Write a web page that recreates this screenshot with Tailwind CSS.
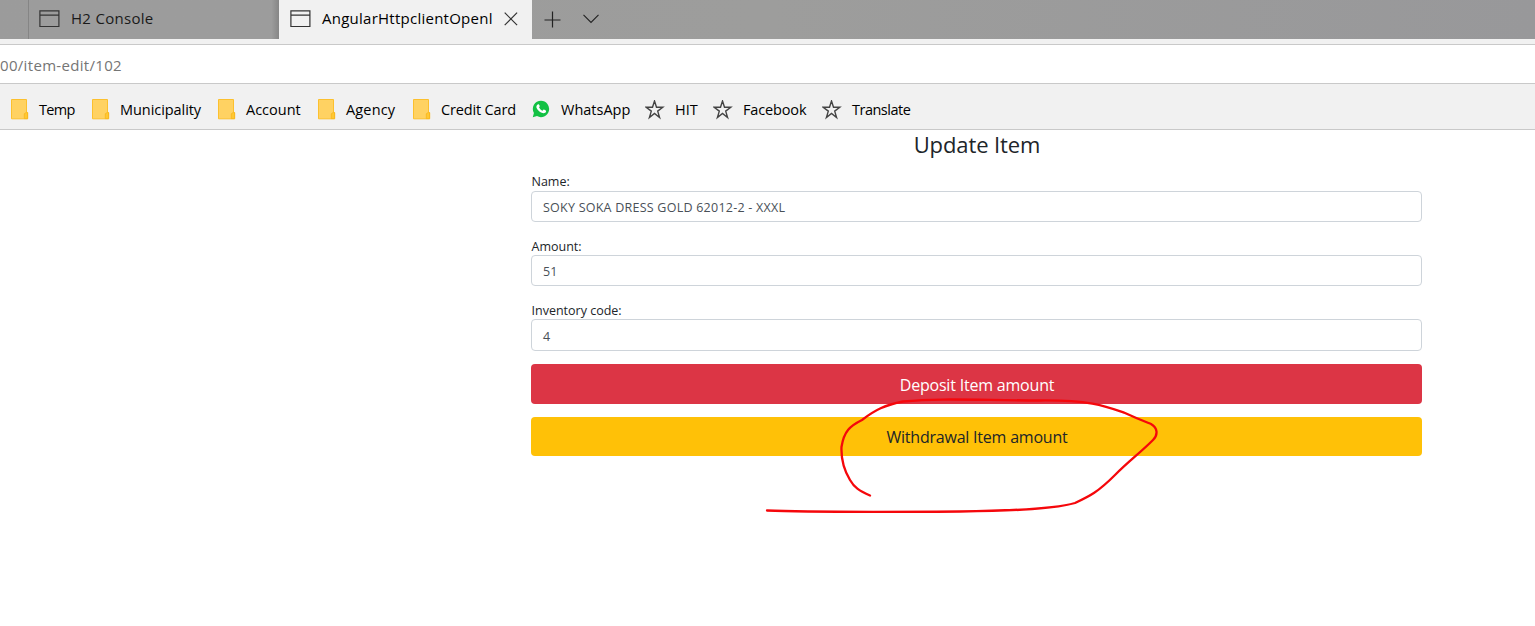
<!DOCTYPE html>
<html lang="en">
<head>
<meta charset="utf-8">
<title>AngularHttpclientOpenl</title>
<script src="https://cdn.jsdelivr.net/npm/@tailwindcss/browser@4"></script>
</head>
<body class="h-[626px] overflow-hidden bg-white font-['Open_Sans','Noto_Sans',sans-serif] text-black">
<svg class="hidden">
  <symbol id="page" viewBox="0 0 21 18"><path d="M.9.9h19v15.6H.9zM.9 5.1h19" fill="none" stroke="currentColor" stroke-width="1.2"/></symbol>
  <symbol id="folder" viewBox="0 0 18 21"><path d="M.5.5h15v13.2h1.2v6.1H.5z" fill="#ffd262" stroke="#fcc02e"/><path d="M15.5 13.3l-2.2 1.5v4.8h3.2v-6z" fill="#ffc832" stroke="#f8b51c" stroke-width=".8"/></symbol>
  <symbol id="star" viewBox="0 0 20 20"><path d="M9.500 1l2 6.200h6.300l-5.100 3.900 1.900 6.400-5.100-4-5.100 4 1.900-6.400L1.200 7.200h6.300z" fill="none" stroke="#444" stroke-width="1.400"/></symbol>
</svg>
<header>
  <div class="flex h-[39px] bg-linear-to-r from-[#9b9b9b] via-[#9d9d9c] to-[#98989a]">
    <div class="w-[29px] border-r border-[#858585]"></div>
    <div class="flex w-[250px] items-start bg-linear-to-r from-[#9c9c9c] from-97% to-[#868686] pl-[10px] text-[#1a1a1a]">
      <svg class="mt-[9.5px] h-[18px] w-[21px] text-[#333]"><use href="#page"/></svg>
      <span class="ml-[11px] mt-[8px] whitespace-nowrap text-[15px] leading-5 tracking-[0.3px]">H2 Console</span>
    </div>
    <div class="flex w-[253px] items-start bg-[#f1f1f1] pl-[11px]">
      <svg class="mt-[9.5px] h-[18px] w-[21px] text-[#333]"><use href="#page"/></svg>
      <span class="ml-[11px] mt-[8px] w-[171px] whitespace-nowrap text-[15px] leading-5 tracking-[0.25px]">AngularHttpclientOpenl</span>
      <svg class="ml-[11px] mt-[12px] size-[14px]" viewBox="0 0 14 14"><path d="M.7.7l12.4 12.4M13.1.7L.7 13.1" stroke="#333" stroke-width="1.2"/></svg>
    </div>
    <svg class="ml-[12px] mt-[11px] size-[17px]" viewBox="0 0 17 17"><path d="M8.500.5v16M.5 9h16" stroke="#222" stroke-width="1.2"/></svg>
    <svg class="ml-[22px] mt-[14px] h-[10px] w-[16px]" viewBox="0 0 16 10"><path d="M.5.8L8 8.500 15.500.8" fill="none" stroke="#222" stroke-width="1.1"/></svg>
  </div>
  <div class="h-[6px] border-b border-[#c9c9c9] bg-[#f1f1f1]"></div>
  <div class="h-[39px] border-b border-[#c9c9c9] bg-white pt-[10px]">
    <span class="block w-max whitespace-nowrap text-[15px] leading-5 tracking-[0.32px] text-[#757575]">00/item-edit/102</span>
  </div>
  <nav class="flex h-[46px] border-b border-[#c9c9c9] bg-[#f1f1f1] pl-[11px] text-[14.5px] leading-5 whitespace-nowrap">
    <a class="flex w-[81px]"><svg class="mt-[15px] h-[21px] w-[18px]"><use href="#folder"/></svg><span class="ml-[10px] mt-[16px] tracking-[-0.7px]">Temp</span></a>
    <a class="flex w-[126px]"><svg class="mt-[15px] h-[21px] w-[18px]"><use href="#folder"/></svg><span class="ml-[10px] mt-[16px] tracking-[-0.06px]">Municipality</span></a>
    <a class="flex w-[100px]"><svg class="mt-[15px] h-[21px] w-[18px]"><use href="#folder"/></svg><span class="ml-[10px] mt-[16px]">Account</span></a>
    <a class="flex w-[95px]"><svg class="mt-[15px] h-[21px] w-[18px]"><use href="#folder"/></svg><span class="ml-[10px] mt-[16px] tracking-[0.15px]">Agency</span></a>
    <a class="flex w-[119px]"><svg class="mt-[15px] h-[21px] w-[18px]"><use href="#folder"/></svg><span class="ml-[10px] mt-[16px] tracking-[-0.15px]">Credit Card</span></a>
    <a class="flex w-[113px]"><svg class="mt-[16px] size-[18px]" viewBox="0 0 18 18"><path d="M9 .7a8.200 8.200 0 1 1-4 15.400L.8 17.200 1.900 13A8.200 8.200 0 0 1 9 .7z" fill="#13c144"/><path d="M5.700 4.600c.8-.8 1.300-.4 1.600.4.6 1.300.6 1.500-.2 2.400.9 1.600 1.900 2.600 3.500 3.300.8-1.100 1.100-1.300 1.800-.9 1.700.8 2 .9 1.600 1.900-.6 1.500-2.400 1.800-4.300 1.100-2.400-.9-4.100-2.500-5.100-4.700-.5-1.200-.2-2.500 1.100-3.500z" fill="#fff"/></svg><span class="ml-[11px] mt-[16px]">WhatsApp</span></a>
    <a class="flex w-[68px]"><svg class="mt-[16px] size-[20px]"><use href="#star"/></svg><span class="ml-[10px] mt-[16px]">HIT</span></a>
    <a class="flex w-[109px]"><svg class="mt-[16px] size-[20px]"><use href="#star"/></svg><span class="ml-[10px] mt-[16px] tracking-[-0.15px]">Facebook</span></a>
    <a class="flex"><svg class="mt-[16px] size-[20px]"><use href="#star"/></svg><span class="ml-[10px] mt-[16px] tracking-[-0.5px]">Translate</span></a>
  </nav>
</header>
<main class="ml-[531px] flex w-[891px] flex-col text-[#212529]">
  <h1 class="h-[43px] pl-px text-center text-[22px] leading-[28px] tracking-[-0.1px]">Update Item</h1>
  <label class="mb-px h-[17px] pl-[0.5px] text-[12.5px] leading-[17px]">Name:</label>
  <div class="h-[31px] rounded-[4px] border border-[#ced4da] pl-[11px] text-[12.5px] leading-[31px] tracking-[0.24px] text-[#495057]">SOKY SOKA DRESS GOLD 62012-2 - XXXL</div>
  <label class="mt-[16px] h-[17px] pl-[0.5px] text-[12.5px] leading-[17px]">Amount:</label>
  <div class="h-[31px] rounded-[4px] border border-[#ced4da] pl-[11px] text-[12.5px] leading-[31px] text-[#495057]">51</div>
  <label class="mt-[16px] h-[17px] pl-[0.5px] text-[12.5px] leading-[17px]">Inventory code:</label>
  <div class="h-[32px] rounded-[4px] border border-[#ced4da] pl-[11px] text-[12.5px] leading-[33px] text-[#495057]">4</div>
  <button class="mt-[13px] h-[40px] rounded-[4px] bg-[#dc3545] pt-[2px] pl-px text-[16px] leading-[38px] tracking-[-0.2px] text-white">Deposit Item amount</button>
  <button class="mt-[13px] h-[39px] rounded-[4px] bg-[#ffc107] pt-px pl-px text-[16px] leading-[38px] tracking-[-0.22px]">Withdrawal Item amount</button>
</main>
<svg class="pointer-events-none absolute left-[760px] top-[390px] h-[130px] w-[405px]" viewBox="760 390 405 130"><path d="M870 495.500C859 491 854 487 850 480C844 470 841 460 841.500 447C844 431 850 426 862 420C875 410 885 405 903 401.500C940 398 970 400 1040 400.500C1090 400 1105 406 1125 413C1138 419 1146 422 1151 424C1158 428 1158 435 1153 440C1140 453 1130 460 1115 475C1098 492 1090 496 1075 503C1050 510 1000 511 960 511.500C880 512 800 512 767 510.500" fill="none" stroke="#f5070b" stroke-width="2.300" stroke-linecap="round"/></svg>
</body>
</html>
